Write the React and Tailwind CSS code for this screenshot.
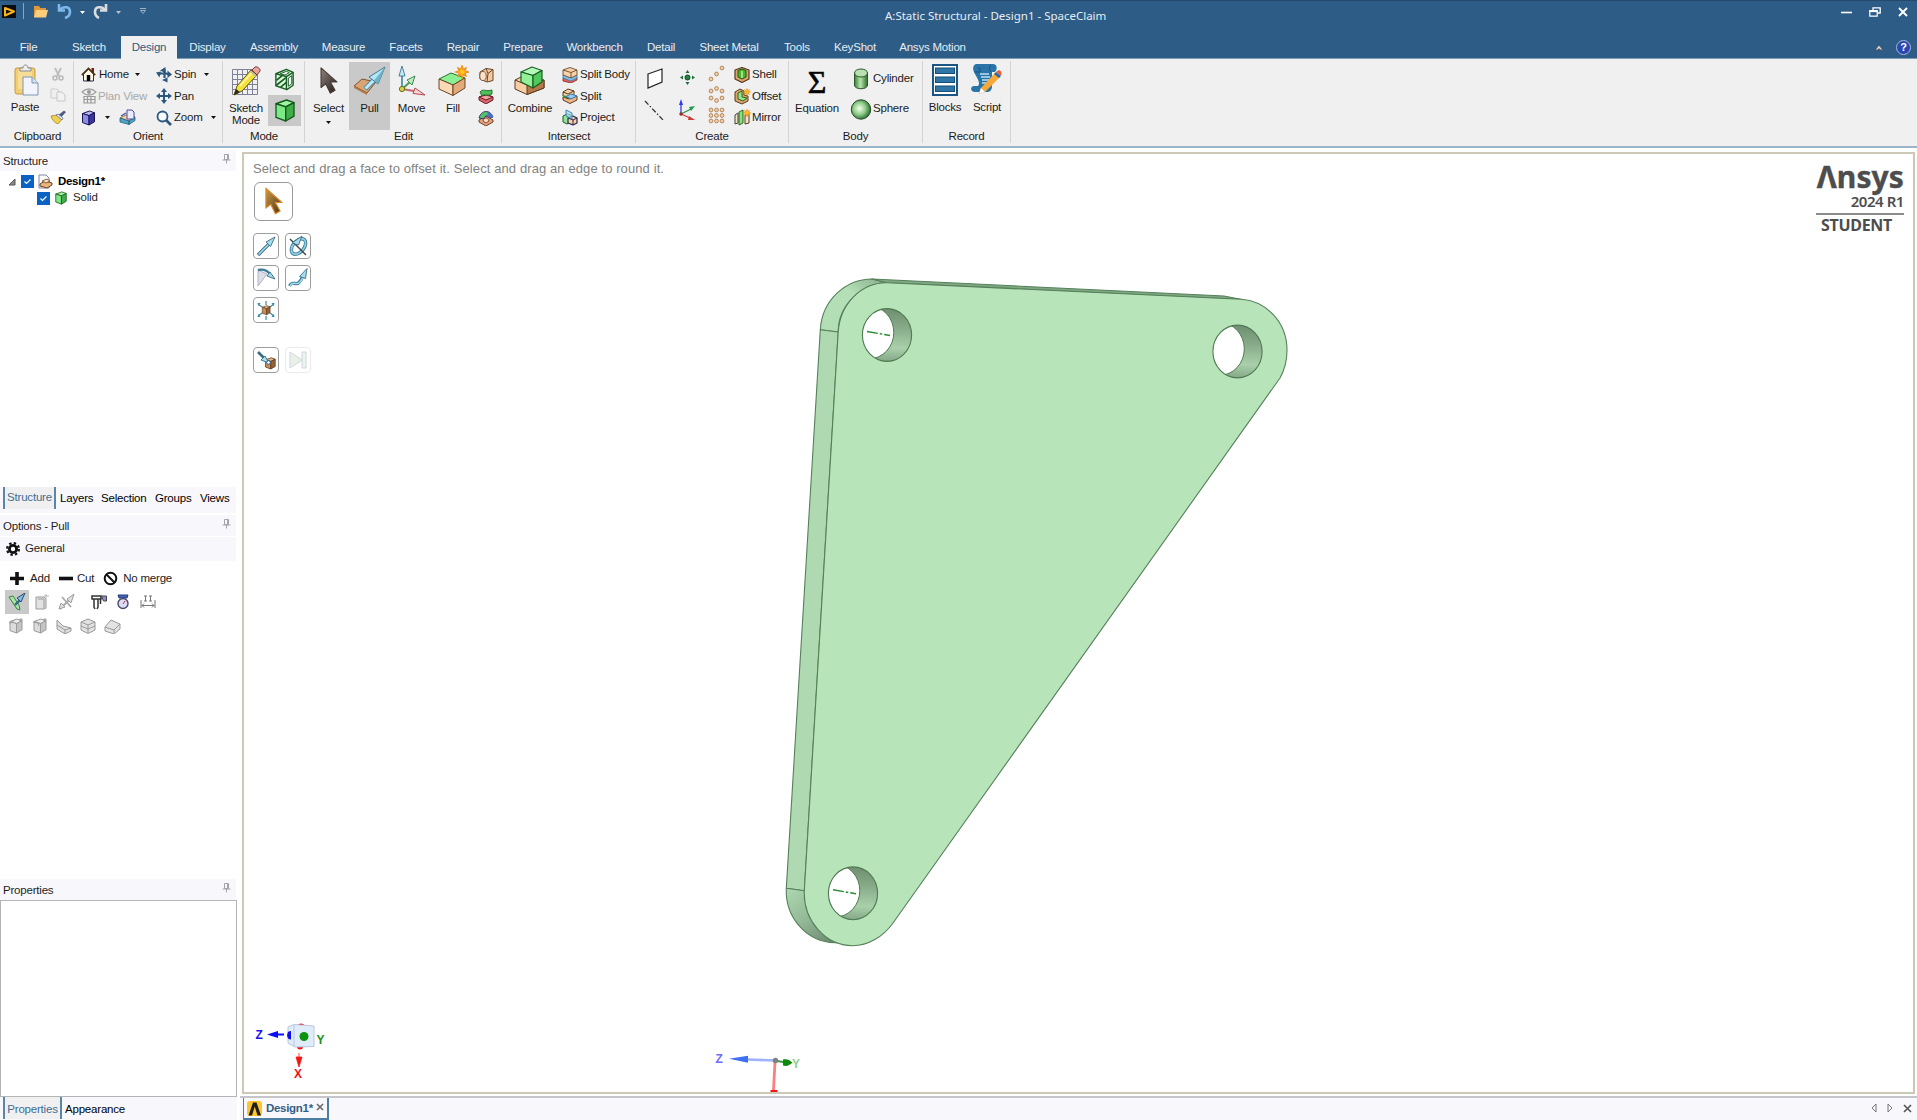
import React from "react";

const Svg = ({ w, h = w, vb, className = "", children }) => (
  <svg width={w} height={h} viewBox={vb || `0 0 ${w} ${h}`} className={`shrink-0 ${className}`} fill="none">
    {children}
  </svg>
);

/* ---------- shared shapes ---------- */
const Block = ({ x = 0, y = 0, s = 1, t, l, r, k, sw = 1 }) => (
  <g transform={`translate(${x} ${y}) scale(${s})`} stroke={k} strokeWidth={sw} strokeLinejoin="round">
    <path d="M2 3.500 9 1l5 1.800L8.500 5.600z" fill={t} />
    <path d="M2 3.500 8.500 5.600V15L2 12.600z" fill={l} />
    <path d="M8.500 5.600 14 2.800v9L8.500 15z" fill={r} />
  </g>
);
const tan = { t: "#e8b37d", l: "#c98c54", r: "#99612f", k: "#5a3a20" };
const green = { t: "#9df5a2", l: "#7fe886", r: "#3fae49", k: "#145a1c" };
const gray = { t: "#ededed", l: "#dcdcdc", r: "#c4c4c4", k: "#9b9b9b" };

const Caret = ({ className = "" }) => (
  <Svg w={5} h={3} className={className}><path d="M0 0h5L2.5 3z" fill="#111" /></Svg>
);
const Spark = ({ x, y, s = 1 }) => (
  <g transform={`translate(${x} ${y}) scale(${s})`}>
    <path d="M0-5 1-2 3.500-3.500 2-1 5 0 2 1 3.500 3.500 1 2 0 5-1 2-3.500 3.500-2 1-5 0-2-1-3.500-3.500-1-2z" fill="#ffc21f" stroke="#f08a12" strokeWidth=".8" />
  </g>
);

/* ---------- ribbon icons ---------- */
const PasteIcon = () => (
  <Svg w={26} h={32}>
    <rect x="1" y="4" width="20" height="26" rx="2" fill="#f2cd72" stroke="#c79a3e" />
    <path d="M4 7h14v18H4z" fill="#f8dd95" />
    <path d="M6 7V4h3c0-4 5-4 5 0h3v3z" fill="#ececec" stroke="#8a8a8a" />
    <path d="M9 13h9l6 6v12H9z" fill="#f1f5fb" stroke="#7e93b5" />
    <path d="M18 13v6h6" fill="#d7e1f0" stroke="#7e93b5" />
  </Svg>
);
const ScissorsIcon = () => (
  <Svg w={14} h={14} className="opacity-70">
    <path d="M4 1l4 8M10 1 6 9" stroke="#a8a8a8" strokeWidth="1.800" />
    <circle cx="4" cy="11" r="2" stroke="#a0a0a0" strokeWidth="1.500" /><circle cx="10" cy="11" r="2" stroke="#a0a0a0" strokeWidth="1.500" />
  </Svg>
);
const CopyIcon = () => (
  <Svg w={16} h={14}>
    <path d="M1 1h6l2 2v7H1z" fill="#efefef" stroke="#cccccc" /><path d="M7 4h5l3 3v6H7z" fill="#f2f2f2" stroke="#c6c6c6" />
  </Svg>
);
const BrushIcon = () => (
  <Svg w={16} h={14}>
    <path d="M9 5l5-4 1.500 1L11 7z" fill="#4a5a8a" stroke="#333c66" strokeWidth=".6" />
    <path d="M1 6l6-1 5 4-4 5c-3-1-6-4-7-8z" fill="#f0cf55" stroke="#a98520" strokeWidth=".8" />
    <path d="M6 5l2-1 5 4-1 2z" fill="#e8ecf5" stroke="#67708f" strokeWidth=".8" />
  </Svg>
);
const HomeIcon = () => (
  <Svg w={15} h={15}>
    <path d="M10.500 1h2.500v5h-2.500z" fill="#7d1a1a" />
    <path d="M2.500 7 7.500 2l5 5v7h-10z" fill="#fff8e4" stroke="#2c2a55" />
    <path d="M.8 8.200 7.500 1.500l6.700 6.700" stroke="#4d3510" strokeWidth="1.700" />
    <path d="M5.800 8h3.400v6H5.800z" fill="#000" />
  </Svg>
);
const PlanIcon = () => (
  <Svg w={17} h={16}>
    <path d="M1 4c4-4 10-4 14 0-4 4-10 4-14 0z" stroke="#a5a5a5" strokeWidth="1.300" /><circle cx="8" cy="4" r="2" fill="#989898" />
    <path d="M3 8.500h11v6.500H3zM3 11.500h11M6.500 8.500V15M10 8.500V15" stroke="#9a9a9a" strokeWidth="1.200" />
  </Svg>
);
const BlueCube = () => (
  <Svg w={15} h={16}><Block x={-0.5} t="#b9b6f5" l="#8d8aec" r="#3834a0" k="#19164f" /></Svg>
);
const SectionIcon = () => (
  <Svg w={17} h={16}>
    <path d="M1 9l6-3 9 2-6 4z" fill="#f3d0a6" stroke="#7a5836" strokeWidth=".8" />
    <path d="M1 9v4l9 2.500V12zM10 12v3.500l6-4V8z" fill="#4ea3c9" stroke="#28617c" strokeWidth=".8" />
    <path d="M8 1h5l2 2v7H8z" fill="#e9ebfb" stroke="#4a4aa0" /><path d="M2 7l5-3" stroke="#4a4aa0" strokeWidth="1.300" />
  </Svg>
);
const SpinIcon = () => (
  <Svg w={16} h={16}>
    <path d="M8.500 2V11M2 7.500c3-1.500 8-1.500 11 0" stroke="#2d587d" strokeWidth="2.200" />
    <path d="M4 3.500L9.500 0v6zM11.500 3.500l4.500 4-4.500 3.500zM0 5.500l5-1-1.500 6zM11.500 10.500v5L6 13z" fill="#2d587d" />
  </Svg>
);
const PanIcon = () => (
  <Svg w={16} h={16}>
    <path d="M8 2v12M2 8h12" stroke="#2d587d" strokeWidth="2" />
    <path d="M8 0l3 4H5zM8 16l3-4H5zM0 8l4-3v6zM16 8l-4-3v6z" fill="#2d587d" />
  </Svg>
);
const ZoomIcon = () => (
  <Svg w={16} h={16}>
    <circle cx="6.500" cy="6.500" r="5" fill="#f6fafd" stroke="#2d587d" strokeWidth="1.800" /><path d="M10 10l5 5" stroke="#2d587d" strokeWidth="2.600" />
  </Svg>
);
const SketchIcon = () => (
  <Svg w={30} h={32}>
    <path d="M1.500 4.500h25v25h-25zM1.500 9.500h25M1.500 14.500h25M1.500 19.500h25M1.500 24.500h25M6.500 4.500v25M11.500 4.500v25M16.500 4.500v25M21.500 4.500v25" stroke="#7f8098" />
    <path d="M3 30l3-9L20 5l6 5L11 26z" fill="#f4e23c" stroke="#5d5510" />
    <path d="M9 21L21 7.500" stroke="#fffbb0" strokeWidth="1.500" /><path d="M3 30l2-6 4 3z" fill="#2e2a12" />
    <path d="M21 5l3-3c2-1 6 2 5 4l-3 4z" fill="#e9a29c" stroke="#7a3b38" /><path d="M19.500 6.500l6 5" stroke="#b9b9b9" strokeWidth="1.500" />
  </Svg>
);
const HatchCube = () => (
  <Svg w={21} h={23} vb="0 0 21 24">
    <path d="M1.500 6l11-4.500 7 3v13.500l-6.500 4.500-11.500-4z" fill="#d8fbdc" stroke="#1b5e26" strokeWidth="1.500" strokeLinejoin="round" />
    <path d="M1.500 6l11 3v13.500M12.500 9l7-4.500" stroke="#1b5e26" strokeWidth="1.500" />
    <path d="M2 13l6-5M2 18l10-8M6.500 20l6-5" stroke="#1b5e26" strokeWidth="1.800" />
    <path d="M14.500 10.500v8.500l3.500-2.500V8zM6 6l6.500-2.500 3 1.300-4.500 2.500z" fill="#fff" stroke="#1b5e26" />
  </Svg>
);
const GreenCube = ({ w = 24, h = 25 }) => (
  <Svg w={w} h={h} vb="0 0 16 16"><Block {...green} sw={0.9} /></Svg>
);
const Pointer = ({ a, b, k, w = 20, h = 30 }) => (
  <Svg w={w} h={h} vb="0 0 20 30">
    <defs><linearGradient id={`ptr${a.slice(1)}`} x1="0" y1="0" x2="1" y2="1"><stop offset="0" stopColor={a} /><stop offset="1" stopColor={b} /></linearGradient></defs>
    <path d="M2 1v21l5-4 5 10 5-3-5-9h7z" fill={`url(#ptr${a.slice(1)})`} stroke={k} strokeWidth="1.200" strokeLinejoin="round" />
  </Svg>
);
const PullIcon = () => (
  <Svg w={34} h={32}>
    <path d="M1 21l8-7 14 3-9 11z" fill="#dba472" stroke="#7d532d" /><path d="M1 21v2l13 7v-2z" fill="#b37a48" />
    <path d="M12 24l9-9" stroke="#4c8fa8" strokeWidth="5" /><path d="M12.500 23.500l9-9" stroke="#bfeaf5" strokeWidth="3" />
    <path d="M32 2L16 12l9 7z" fill="#b4e6f3" stroke="#47788d" strokeLinejoin="round" /><path d="M32 2L21 15.500l4 3.500z" fill="#6db3ca" />
  </Svg>
);
const MoveIcon = () => (
  <Svg w={30} h={32}>
    <path d="M5 24V8" stroke="#5f9bb5" strokeWidth="2" /><path d="M5 1L2 11h6z" fill="#c6ebf5" stroke="#4c8099" />
    <path d="M5 24l8-7" stroke="#4d9a5d" strokeWidth="2" /><path d="M18 11l-8 4 5 5z" fill="#bdeac2" stroke="#3d8b4d" />
    <path d="M5 24l12 2" stroke="#c16b70" strokeWidth="2" /><path d="M28 30l-10-7-2 5.500z" fill="#f5d5d5" stroke="#b6484e" />
    <circle cx="5" cy="24" r="2.600" fill="#d4d44c" stroke="#6c6c1c" />
  </Svg>
);
const FillIcon = () => (
  <Svg w={32} h={32}>
    <g stroke="#6b4426" strokeLinejoin="round"><path d="M2 14l12-6 14 5-12 7z" fill="#8bf091" stroke="#27752f" /><path d="M2 14v10l14 6.500V20z" fill="#fbd9b4" /><path d="M16 20v10.500L28 23V13z" fill="#e2ab7a" /></g>
    <Spark x={25} y={7} s={1.300} />
  </Svg>
);
const MiniA = () => (
  <Svg w={16} h={16}><path d="M2 5l6-3.500 7 1v11l-6 1.500-7-3z" fill="#f3c99f" stroke="#6b4426" /><path d="M8 1.500l2 5-1 8M15 2.500l-5 4" stroke="#6b4426" /><ellipse cx="5" cy="9" rx="3.200" ry="4.500" fill="#fbe3ca" stroke="#6b4426" strokeWidth=".8" /></Svg>
);
const MiniB = () => (
  <Svg w={16} h={16}><path d="M1 9l7-3 7 3v3l-7 4-7-4z" fill="#d8646c" stroke="#6d1f26" /><path d="M1 9l7 3 7-3-7-2z" fill="#f3a2a2" stroke="#6d1f26" /><path d="M2 4c3-4 6 0 12-2v4C9 9 6 5 4 8z" fill="#4fbf5c" stroke="#1c6b27" strokeWidth=".9" /></Svg>
);
const MiniC = () => (
  <Svg w={16} h={16}><path d="M1 10l7-4 7 4v2l-7 4-7-4z" fill="#e5a07c" stroke="#6b4426" /><path d="M1 8C3 0 12-1 15 7l-4 1C10 5 7 5 6 9z" fill="#52c06c" stroke="#3a2d6b" /><path d="M9 2c3 0 5 2 6 5l-4 1z" fill="#4b6fd0" /><path d="M5 11c1-4 5-4 6 0l-3 2z" fill="#f6dcc0" stroke="#6d2f26" strokeWidth=".8" /></Svg>
);
const CombineIcon = () => (
  <Svg w={34} h={32}>
    <g strokeLinejoin="round" stroke="#5a3a20"><path d="M2 15l8-4 21 4v8L14 29.500 2 24z" fill="#f8cfa5" /><path d="M14 20v9.500L31 23v-8z" fill="#b57a48" /><path d="M2 15l12 5" /></g>
    <g strokeLinejoin="round" stroke="#176024" strokeWidth="1.200"><path d="M8 7l11-5 10 3.500-9 5z" fill="#b5f9b6" /><path d="M8 7v10l12 6V10.500z" fill="#93f097" /><path d="M20 10.500V23l9-6V5.500z" fill="#4fc85c" /></g>
  </Svg>
);
const SplitBodyIcon = () => (
  <Svg w={16} h={16}><g strokeLinejoin="round" strokeWidth=".8"><path d="M1 11v3l8 2 6-3v-3z" fill="#e55e55" stroke="#872720" /><path d="M1 8v3l8 3 6-3V8z" fill="#7cc0ee" stroke="#3c78a5" /><path d="M1 3l7-2.500L15 3v5l-6 3-8-3z" fill="#f8d1a6" stroke="#5a3a20" /><path d="M1 3l8 2.500L15 3M9 5.500V11" stroke="#5a3a20" /></g></Svg>
);
const SplitIcon = () => (
  <Svg w={16} h={16}><g strokeLinejoin="round"><path d="M1 4l5-3 6 2v4l-6 3-5-2z" fill="#f8d1a6" stroke="#5a3a20" /><path d="M1 4l5 2 6-3" stroke="#5a3a20" /><path d="M1 9l6 2 8-3v4l-7 3.500L1 12z" fill="#efb888" stroke="#5a3a20" /><path d="M4 8.500l5-2.500 6 2-6 3z" fill="#93cdf1" stroke="#3c78a5" /><path d="M1 8l3 1" stroke="#2aa23a" strokeWidth="2" /></g></Svg>
);
const ProjectIcon = () => (
  <Svg w={16} h={17}><g strokeLinejoin="round"><path d="M1 7l4-2 4 1v7l-4 2-4-2z" fill="#8fe496" stroke="#1c5b2a" /><path d="M6 9l5-2 4 2v5l-4 2-5-2z" fill="#f8d1a6" stroke="#2a2455" strokeWidth="1.200" /><path d="M6 9l5 2 4-2M11 11v5" stroke="#2a2455" /><path d="M4 1l6 3v6L4 7z" fill="#a4d8f0" fillOpacity=".7" stroke="#3c88b5" /></g></Svg>
);
const PlaneIcon = () => <Svg w={18} h={21}><path d="M2 6l14-5v13L2 20z" fill="#fff" stroke="#222" strokeWidth="1.200" /></Svg>;
const AxisLine = () => <Svg w={22} h={22}><path d="M1 1l19 20" stroke="#333" strokeWidth="1.300" strokeDasharray="5 2 1.500 2" /></Svg>;
const PointIcon = () => (
  <Svg w={15} h={15}><circle cx="7.500" cy="7.500" r="2.500" fill="#1c8a3d" stroke="#173f25" /><path d="M7.500 0l2 3h-4zM7.500 15l2-3h-4zM0 7.500l3-2v4zM15 7.500l-3-2v4z" fill="#1e6d38" /></Svg>
);
const AxesIcon = () => (
  <Svg w={18} h={22}><path d="M3 15V5" stroke="#2b3bf0" strokeWidth="1.300" /><path d="M3 0l2 6H1z" fill="#2b3bf0" /><path d="M3 15l10-5" stroke="#1e9a4a" strokeWidth="1.300" /><path d="M17 7l-6 1 2 4z" fill="#1e9a4a" /><path d="M3 15l9 4" stroke="#d23b33" strokeWidth="1.300" /><path d="M17 21l-6-4-1 4z" fill="#d23b33" /><circle cx="3" cy="15" r="1.700" fill="#a02a22" /></Svg>
);
const Dots = ({ pts }) => (
  <Svg w={17} h={17}>{pts.map(([x, y]) => <circle key={`${x}-${y}`} cx={x} cy={y} r="1.900" fill="#f6cfa4" stroke="#a98059" strokeWidth=".9" />)}</Svg>
);
const linear = [[3, 14], [8.5, 9], [14, 3]];
const circular = [[8.5, 2.5], [14, 5], [14, 12], [8.5, 14.5], [3, 12], [3, 5]];
const gridPts = [[3, 3], [8.5, 3], [14, 3], [3, 8.5], [8.5, 8.5], [14, 8.5], [3, 14], [8.5, 14], [14, 14]];
const ShellIcon = () => (
  <Svg w={16} h={16}><g strokeLinejoin="round"><path d="M1 3l7-2.500L15 3v9l-7 3.500L1 12z" fill="#dca36c" stroke="#5a3a20" strokeWidth="1.200" /><path d="M4 3.500l4-1.500 4 1.500V10l-4 2-4-2z" fill="#49b32f" stroke="#1d5c12" /><path d="M8 4v7" stroke="#b8f59d" strokeWidth="1.500" /></g></Svg>
);
const OffsetIcon = () => (
  <Svg w={17} h={17}><g strokeLinejoin="round"><path d="M1 4l5-3 4 2v4l4 1v5l-6 3-7-3z" fill="#dca36c" stroke="#5a3a20" /><path d="M4 5l4-2v6l5 1-4 3-5-2z" fill="#9be28c" stroke="#256b1c" /></g><Spark x={13} y={4} s={0.7} /></Svg>
);
const MirrorIcon = () => (
  <Svg w={17} h={17}><g strokeLinejoin="round"><path d="M1 6l3-2v10l-3 1z" fill="#f8e0c4" stroke="#444" /><path d="M5 3l4-2v13l-4 2z" fill="#8adf7e" stroke="#256b1c" /><path d="M11 6l4-1v9l-4 1z" fill="#f3e3cf" stroke="#5a3a20" /></g><Spark x={13} y={4} s={0.75} /></Svg>
);
const CylinderIcon = () => (
  <Svg w={16} h={22}><defs><linearGradient id="cyl"><stop offset="0" stopColor="#3d7c3a" /><stop offset=".45" stopColor="#b6e6ac" /><stop offset="1" stopColor="#2f6d2e" /></linearGradient></defs>
    <path d="M1.500 5v12c0 5 13 5 13 0V5z" fill="url(#cyl)" stroke="#28562a" /><ellipse cx="8" cy="5" rx="6.500" ry="4" fill="#b9dfb3" stroke="#28562a" /></Svg>
);
const SphereIcon = () => (
  <Svg w={22} h={21}><defs><radialGradient id="sph" cx=".42" cy=".45" r=".6"><stop offset="0" stopColor="#f4fff0" /><stop offset=".5" stopColor="#94d08e" /><stop offset="1" stopColor="#25652c" /></radialGradient></defs>
    <ellipse cx="11" cy="10.500" rx="9.700" ry="9.700" fill="url(#sph)" stroke="#1f4a24" /></Svg>
);
const BlocksIcon = () => (
  <Svg w={26} h={32}><rect x="1" y="1" width="24" height="30" fill="#fff" stroke="#1b5581" strokeWidth="2" />
    {[4, 13, 22].map((y) => <rect key={y} x="3.500" y={y} width="19" height="5.500" fill="#2f76a6" stroke="#174e78" />)}</Svg>
);
const ScriptIcon = () => (
  <Svg w={34} h={34}>
    <path d="M6 1h17c4 0 5 5 2 8h-3v14c0 4-2 6-5 6H5c-5 0-5-6-1-6h4c3-3-1-8-3-12C2 6 3 2 6 1z" fill="#2a74a8" />
    <path d="M8 5c2-1 3 2 2 4H5M21 2c-2 2-2 5 0 7" stroke="#14527f" />
    <path d="M10 11h9M11 14h9M12 17h8M12 20h6" stroke="#bfe0f3" strokeWidth="1.300" />
    <path d="M9 31l2-6L25 10l5 4-15 15z" fill="#f8a93a" /><path d="M9 31l2-6 4 4z" fill="#fff" stroke="#ccc" strokeWidth=".5" />
    <path d="M24 11l2-2 5 4-2 2z" fill="#1f6da4" /><path d="M26 9l2-1.500c2-1 4 1.500 3.500 3L31 13z" fill="#e8603c" />
  </Svg>
);

/* ---------- ribbon structure ---------- */
const Group = ({ w, label, labelClass = "", children }) => (
  <section className={`${w} flex h-[87px] shrink-0 flex-col`}>
    <div className="flex h-[70px]">{children}</div>
    <div className={`text-center leading-[14px] ${labelClass}`}>{label}</div>
  </section>
);
const Sep = () => <div className="mt-[2px] h-[82px] w-px shrink-0 bg-[#d3d3d3]" />;
const Big = ({ w, icon, label, className = "", children }) => (
  <button className={`${w} flex h-[68px] shrink-0 flex-col items-center text-center ${className}`}>
    <span className="flex h-[32px] items-center justify-center">{icon}</span>
    <span className="mt-[5px] leading-[12px] whitespace-pre">{label}</span>
    {children}
  </button>
);
const Row = ({ icon, label, iw = "w-[17px]", caret, className = "" }) => (
  <div className={`flex h-[21.5px] items-center ${className}`}>
    <span className={`${iw} flex shrink-0 items-center`}>{icon}</span>
    <span className="whitespace-nowrap">{label}</span>
    {caret && <Caret className={caret} />}
  </div>
);

const Ribbon = () => (
  <div className="flex h-[89px] border-b-2 border-[#9ab5ca] bg-[#f0f0f0] text-[#1c1c1c]">
    <Group w="w-[73px]" label="Clipboard" labelClass="pl-[2px]">
      <Big w="ml-[6px] w-[38px]" className="pt-[5px]" icon={<span className="pl-[3px]"><PasteIcon /></span>} label="Paste" />
      <div className="ml-[6px] flex w-[18px] flex-col pt-[4px]">
        <Row icon={<ScissorsIcon />} className="pl-px" /><Row icon={<CopyIcon />} /><Row icon={<BrushIcon />} />
      </div>
    </Group>
    <Sep />
    <Group w="w-[148px]" label="Orient">
      <div className="ml-[7px] w-[75px] pt-[5px]">
        <Row icon={<HomeIcon />} label="Home" iw="w-[18px]" caret="ml-[6px]" />
        <Row icon={<PlanIcon />} label="Plan View" className="text-[#a9a9a9]" />
        <Row icon={<BlueCube />} label="" iw="w-[24px]" caret="mr-[9px]" />
      </div>
      <div className="-ml-[37px] flex w-[37px] flex-col justify-end pb-[1px]"><Row icon={<SectionIcon />} /></div>
      <div className="pt-[5px]">
        <Row icon={<SpinIcon />} label="Spin" iw="w-[18px]" caret="ml-[8px]" />
        <Row icon={<PanIcon />} label="Pan" iw="w-[18px]" />
        <Row icon={<ZoomIcon />} label="Zoom" iw="w-[18px]" caret="ml-[8px]" />
      </div>
    </Group>
    <Sep />
    <Group w="w-[81px]" label="Mode" labelClass="pl-px">
      <Big w="ml-[3px] w-[40px]" className="pt-[6px]" icon={<SketchIcon />} label={"Sketch\nMode"} />
      <div className="ml-[2px] flex w-[33px] flex-col items-center pt-[9px]">
        <HatchCube />
        <span className="mt-[4px] flex h-[31px] w-[33px] items-center justify-center bg-[#c9c9c9]"><GreenCube /></span>
      </div>
    </Group>
    <Sep />
    <Group w="w-[196px]" label="Edit" labelClass="pl-px">
      <Big w="ml-[3px] w-[41px]" className="pt-[6px]" icon={<Pointer a="#8d8480" b="#241b18" k="#4a3a34" w={19} h={28} />} label="Select"><Caret className="mt-[7px]" /></Big>
      <Big w="w-[41px]" className="mt-[3px] bg-[#c9c9c9] pt-[3px]" icon={<PullIcon />} label="Pull" />
      <Big w="w-[43px]" className="pt-[6px]" icon={<MoveIcon />} label="Move" />
      <Big w="w-[40px]" className="pt-[6px]" icon={<FillIcon />} label="Fill" />
      <div className="ml-[5px] pt-[5px]"><Row icon={<MiniA />} /><Row icon={<MiniB />} /><Row icon={<MiniC />} /></div>
    </Group>
    <Sep />
    <Group w="w-[133px]" label="Intersect" labelClass="pl-px">
      <Big w="ml-[3px] w-[50px]" className="pt-[6px]" icon={<CombineIcon />} label="Combine" />
      <div className="ml-[7px] pt-[5px]">
        <Row icon={<SplitBodyIcon />} iw="w-[18px]" label="Split Body" /><Row icon={<SplitIcon />} iw="w-[18px]" label="Split" /><Row icon={<ProjectIcon />} iw="w-[18px]" label="Project" />
      </div>
    </Group>
    <Sep />
    <Group w="w-[152px]" label="Create">
      <div className="ml-[8px] flex w-[22px] flex-col items-center gap-[11px] pt-[9px]"><PlaneIcon /><AxisLine /></div>
      <div className="ml-[11px] flex w-[20px] flex-col items-center gap-[14px] pt-[11px]"><PointIcon /><AxesIcon /></div>
      <div className="ml-[11px] flex flex-col gap-[4px] pt-[6px]"><Dots pts={linear} /><Dots pts={circular} /><Dots pts={gridPts} /></div>
      <div className="ml-[9px] pt-[5px]">
        <Row icon={<ShellIcon />} iw="w-[18px]" label="Shell" /><Row icon={<OffsetIcon />} iw="w-[18px]" label="Offset" /><Row icon={<MirrorIcon />} iw="w-[18px]" label="Mirror" />
      </div>
    </Group>
    <Sep />
    <Group w="w-[133px]" label="Body">
      <div className="ml-[3px] flex w-[50px] flex-col items-center pt-[6px]">
        <span className="h-[37px] font-['Liberation_Serif'] text-[32px] leading-[34px] tracking-normal text-black [-webkit-text-stroke:0.7px_#111]">Σ</span>
        <span className="leading-[13px]">Equation</span>
      </div>
      <div className="ml-[6px] pt-[5px]">
        <div className="flex h-[30px] items-center"><span className="flex w-[25px] justify-center"><CylinderIcon /></span>Cylinder</div>
        <div className="flex h-[30px] items-center"><span className="flex w-[25px] justify-center"><SphereIcon /></span>Sphere</div>
      </div>
    </Group>
    <Sep />
    <Group w="w-[87px]" label="Record">
      <Big w="ml-[1px] w-[42px]" className="pt-[5px]" icon={<BlocksIcon />} label="Blocks" />
      <Big w="w-[42px]" className="pt-[5px]" icon={<ScriptIcon />} label="Script" />
    </Group>
    <Sep />
  </div>
);

const tabs = [
  ["File", "w-[57px]"], ["Sketch", "w-[64px]"], ["Design", "w-[56px]"], ["Display", "w-[61px]"], ["Assembly", "w-[72px]"], ["Measure", "w-[67px]"],
  ["Facets", "w-[58px]"], ["Repair", "w-[56px]"], ["Prepare", "w-[64px]"], ["Workbench", "w-[79px]"], ["Detail", "w-[54px]"], ["Sheet Metal", "w-[82px]"],
  ["Tools", "w-[54px]"], ["KeyShot", "w-[62px]"], ["Ansys Motion", "w-[93px]"],
];

const Header = () => (
  <header className="h-[59px] border-t border-b border-t-[#234a6c] border-b-[#7d9cb6] bg-[#2d5c86] text-[#e6edf4]">
    <div className="flex h-[35px] items-start">
      <div className="flex h-[20px] w-[300px] items-center pl-[2px]">
        <Svg w={14} h={13}><rect width="14" height="13" fill="#0c0c0c" /><path d="M3 3l9 3.500-9 4z" fill="none" stroke="#fdb515" strokeWidth="2" strokeLinejoin="round" /></Svg>
        <div className="ml-[7px] h-[16px] w-px bg-[#8aa5bd]" />
        <Svg w={15} h={13} className="ml-[9px]"><path d="M1 1h5l1.500 2H13v9H1z" fill="#e0963a" /><path d="M3 5h12l-2 7.500H1z" fill="#ffcf7e" /></Svg>
        <Svg w={15} h={15} className="ml-[9px]"><path d="M2 0v6.500h6" stroke="#7db9ea" strokeWidth="2.600" /><path d="M3 6c3-4 10-4 10 2 0 3-2 5-5 6" stroke="#7db9ea" strokeWidth="2.600" /></Svg>
        <Svg w={5} h={3} className="ml-[8px] mt-[3px]"><path d="M0 0h5L2.500 3z" fill="#fff" /></Svg>
        <Svg w={15} h={15} className="ml-[8px]"><path d="M13 0v6.500H7" stroke="#dcdcdc" strokeWidth="2.600" /><path d="M12 6C9 2 2 2 2 8c0 3 2 5 4 6" stroke="#dcdcdc" strokeWidth="2.600" /></Svg>
        <Svg w={5} h={3} className="ml-[8px] mt-[3px]"><path d="M0 0h5L2.500 3z" fill="#b9c6d2" /></Svg>
        <Svg w={6} h={6} className="ml-[19px]"><path d="M0 .5h6M.5 2.500h5L3 5.500z" stroke="#b9c6d2" strokeWidth=".8" /></Svg>
      </div>
      <h1 className="ml-[585px] w-[230px] whitespace-nowrap font-['Noto_Sans'] text-[11.5px] font-normal leading-[30px] tracking-[-0.01px]">A:Static Structural - Design1 - SpaceClaim</h1>
      <div className="ml-auto flex h-[21px] items-center gap-[17px] pr-[9px]">
        <Svg w={11} h={10}><path d="M0 5.500h11" stroke="#fff" strokeWidth="1.600" /></Svg>
        <Svg w={12} h={10}><path d="M4 3V.8h7.200V6H8.500" stroke="#fff" strokeWidth="1.300" /><path d="M.8 3.600h7.400v5.600H.8z" stroke="#fff" strokeWidth="1.200" /><path d="M.5 4.200h8" stroke="#fff" strokeWidth="1.800" /></Svg>
        <Svg w={10} h={10}><path d="M1 1l8 8M9 1L1 9" stroke="#fff" strokeWidth="1.900" /></Svg>
      </div>
    </div>
    <nav className="flex h-[22px] items-center">
      {tabs.map(([t, w]) => (
        <span key={t} className={`${w} flex shrink-0 items-center justify-center pt-px ${t === "Design" ? "mt-px h-[23px] bg-[#f0f0f0] text-[#2d5c86]" : "h-[22px]"}`}>{t}</span>
      ))}
      <Svg w={10} h={7} className="ml-auto"><path d="M1 6l4-5 4 5z" fill="#d7dde3" stroke="#49545e" /><path d="M3.500 6L5 4l1.500 2z" fill="#49545e" /></Svg>
      <span className="ml-[12px] mr-[6px] flex h-[15px] w-[15px] items-center justify-center rounded-full border border-[#a9b9dd] bg-[#2846b0] text-[11px] font-bold text-white">?</span>
    </nav>
  </header>
);

/* ---------- left side ---------- */
const Pin = () => <Svg w={9} h={10}><path d="M2.500.5h4v5h-4zM.5 6h8M4.500 6v3.500M5.500 1v4" stroke="#a3a3ab" /></Svg>;
const PanelHead = ({ title }) => (
  <div className="flex h-[21px] items-center justify-between bg-[#f7f7fc] pl-[3px] pr-[5px] pt-[2px]"><span>{title}</span><span className="-mt-[6px]"><Pin /></span></div>
);
const Check = () => (
  <Svg w={13} h={13}><rect width="13" height="13" fill="#0a63c2" /><path d="M3.500 6.500l2 2 4-4" stroke="#fff" strokeWidth="1.200" /></Svg>
);
const optionRow1 = [
  <Svg w={18} h={18}><path d="M1 4l4-1 6 9 1 5-3-1z" fill="#a9e5a4" stroke="#3d8045" /><path d="M7 12l6-6" stroke="#2f6a84" strokeWidth="2.400" /><path d="M17 0L9 5l4 4z" fill="#7fbbe0" stroke="#2b4d70" /></Svg>,
  <Svg w={16} h={18}><path d="M2 4h8l2 2v9l-2 1H2z" fill="#e2e2e2" stroke="#9a9a9a" /><path d="M4 6h6v9" stroke="#9a9a9a" /><path d="M12 1v5M10 3h5" stroke="#b9b9b9" /></Svg>,
  <Svg w={18} h={18}><path d="M2 16L15 3M4 4l9 10" stroke="#a9a9a9" strokeWidth="1.800" /><path d="M16 1L9 6l4 4zM1 16l2-6 4 4z" fill="#dedede" stroke="#a0a0a0" /></Svg>,
];
const General = () => (
  <div>
    <div className="mt-[6px] flex h-[23px] items-center pl-[9px] text-[#1c1c1c]">
      <Svg w={16} h={15}><path d="M8 1v13M1 7.500h14" stroke="#111" strokeWidth="3.600" /></Svg><span className="ml-[5px]">Add</span>
      <Svg w={16} h={15} className="ml-[8px]"><path d="M1 7.500h14" stroke="#111" strokeWidth="3.600" /></Svg><span className="ml-[3px]">Cut</span>
      <Svg w={15} h={15} className="ml-[9px]"><circle cx="7.500" cy="7.500" r="5.800" stroke="#111" strokeWidth="2" /><path d="M3.500 3.500l8 8" stroke="#111" strokeWidth="2" /></Svg><span className="ml-[5px]">No merge</span>
    </div>
    <div className="flex h-[24px] items-center pl-[5px]">
      <span className="flex h-[24px] w-[24px] items-center justify-center bg-[#c9c9c9]">{optionRow1[0]}</span>
      <span className="flex w-[26px] justify-center">{optionRow1[1]}</span>
      <span className="flex w-[24px] justify-center">{optionRow1[2]}</span>
      <Svg w={16} h={16} className="ml-[12px]"><path d="M1 2h9v3H1zM3 5v8l1 2M7 5v8l-1 2M9.500 4v6" stroke="#333" strokeWidth="1.500" /><path d="M10.500 2h5v5h-3z" fill="#8b8fd8" stroke="#444" /></Svg>
      <Svg w={14} h={16} className="ml-[9px]"><path d="M2 1h10l-1 3H3z" fill="#4664b5" stroke="#233c7c" /><circle cx="7" cy="9.500" r="5" fill="#dcdcf8" stroke="#4a4a68" strokeWidth="1.400" /><path d="M7 10l2-3" stroke="#c33" /></Svg>
      <Svg w={16} h={16} className="ml-[10px]"><path d="M4 2h3M9 2h3M5.500 2v5M10.500 2v5M4 7h3M9 7h3M1 6v8M15 6v8M2 11.500h12M4 9.500l-2 2 2 2M12 9.500l2 2-2 2" stroke="#777" /></Svg>
    </div>
    <div className="flex h-[24px] items-center gap-[8px] pl-[8px]">
      <Svg w={16} h={16}><Block {...gray} /><path d="M1 5c3 0 5-2 5-3M13 0v4M11 2h4" stroke="#999" /></Svg>
      <Svg w={16} h={16}><Block {...gray} /><path d="M1 4l5 1 1 3M13 0v4M11 2h4" stroke="#999" /></Svg>
      <Svg w={16} h={16}><path d="M1 2l6 6 8 2v3l-6 3-8-5z" fill="#e0e0e0" stroke="#999" /><path d="M1 7l8 5 6-2M9 12v4" stroke="#999" /></Svg>
      <Svg w={16} h={16}><path d="M1 4l7-3 7 3v8l-7 3.500L1 12z" fill="#e3e3e3" stroke="#999" /><path d="M1 4l7 3 7-3M8 7v8M1 8l7 3 7-3" stroke="#999" /></Svg>
      <Svg w={17} h={16}><path d="M1 9l6-7 9 4v5l-6 5-9-3z" fill="#e3e3e3" stroke="#999" /><path d="M1 9l9 3 6-6M10 12v3" stroke="#999" /></Svg>
    </div>
  </div>
);
const activeTab = "border-x-2 border-x-[#5a86ac] bg-[#f0f0f0] text-[#3f6d95]";

const Sidebar = () => (
  <aside className="flex w-[237px] shrink-0 flex-col bg-white text-[#1f1f1f]">
    <div className="mt-[2px] mr-[1px]"><PanelHead title="Structure" /></div>
    <div className="h-[316px] pt-[2px]">
      <div className="flex h-[17px] items-center pl-[8px]">
        <Svg w={8} h={8}><path d="M7 1v6H1z" fill="#8a8a8a" stroke="#555" /></Svg>
        <span className="ml-[5px]"><Check /></span>
        <Svg w={15} h={15} className="ml-[4px]"><path d="M1 1h7l3 3v10H1z" fill="#fafafa" stroke="#8189a0" /><path d="M2 10l5-3 7 2v2l-5 3-7-2z" fill="#e8b37d" stroke="#6b4426" /><path d="M4 7l5-2 3 2-4 2z" fill="#f8dcc0" stroke="#6b4426" strokeWidth=".8" /></Svg>
        <b className="ml-[5px] tracking-[-0.3px] text-black">Design1*</b>
      </div>
      <div className="flex h-[16px] items-center pl-[37px]"><Check /><span className="ml-[4px]"><GreenCube w={14} h={14} /></span><span className="ml-[5px]">Solid</span></div>
    </div>
    <div className="mr-[1px] flex h-[26px] bg-[#f7f7fc] pl-[3px] text-black">
      <span className={`flex h-[22px] w-[53px] items-center justify-center ${activeTab}`}>Structure</span>
      <span className="ml-[4px] flex h-[23px] w-[41px] items-center">Layers</span>
      <span className="flex h-[23px] w-[54px] items-center">Selection</span>
      <span className="flex h-[23px] w-[45px] items-center">Groups</span>
      <span className="flex h-[23px] items-center">Views</span>
    </div>
    <div className="mr-[1px] mt-[2px]"><PanelHead title="Options - Pull" /></div>
    <div className="mr-[1px] mt-px flex h-[24px] items-center bg-[#f7f7fc] pl-[6px]">
      <Svg w={14} h={14}>
        <circle cx="7" cy="7" r="3.600" stroke="#111" strokeWidth="2.800" /><circle cx="7" cy="7" r="5.900" stroke="#111" strokeWidth="2.200" strokeDasharray="2.400 2.234" />
      </Svg><span className="ml-[5px]">General</span>
    </div>
    <General />
    <div className="mr-[1px] mt-auto"><PanelHead title="Properties" /></div>
    <div className="h-[197px] border border-[#b4b4b4] bg-white" />
    <div className="flex h-[23px] bg-[#f7f7fc] pl-[3px] text-black">
      <span className={`flex h-[22px] w-[59px] items-center justify-center pt-[3px] ${activeTab}`}>Properties</span>
      <span className="ml-[3px] flex h-[22px] items-center pt-[3px]">Appearance</span>
    </div>
  </aside>
);

/* ---------- viewport ---------- */
const Hole = ({ id, cx, cy, axis }) => (
  <g>
    <clipPath id={id}><ellipse cx={cx} cy={cy} rx="24.600" ry="26.400" /></clipPath>
    <ellipse cx={cx} cy={cy} rx="24.600" ry="26.400" fill="url(#bore)" />
    <ellipse cx={cx - 17.8} cy={cy - 2.6} rx="24.600" ry="26.400" fill="#fff" stroke="#4f7a52" clipPath={`url(#${id})`} />
    <ellipse cx={cx} cy={cy} rx="24.600" ry="26.400" stroke="#4f7a52" strokeWidth="1.100" />
    {axis && <path d={`M${cx - 20} ${cy - 3.5}l23 4`} stroke="#2c8a35" strokeWidth="1.400" strokeDasharray="11 2 2.500 2" />}
  </g>
);
const Scene = () => (
  <svg viewBox="244 154 1670 940" width="1670" height="940" className="absolute inset-0" fill="none">
    <defs>
      <linearGradient id="bore" x1=".8" y1="0" x2=".75" y2="1"><stop offset="0" stopColor="#6f8f70" /><stop offset=".35" stopColor="#86a987" /><stop offset=".75" stopColor="#a9d0aa" /><stop offset="1" stopColor="#87a988" /></linearGradient>
      <linearGradient id="low" x1="0" y1="0" x2=".8" y2="1"><stop offset="0" stopColor="#add8b0" /><stop offset=".5" stopColor="#93b896" /><stop offset="1" stopColor="#66836a" /></linearGradient>
      <linearGradient id="high" x1="0" y1="1" x2="1" y2="0"><stop offset="0" stopColor="#b2deb5" /><stop offset=".6" stopColor="#b5e0b7" /><stop offset="1" stopColor="#86ab88" /></linearGradient>
    </defs>
    <g stroke="#55805a" strokeWidth="1.100" strokeLinejoin="round">
      <path d="M820.300 329.700C822 300 846 279 872 279L887 282.700C862 283 838 305 838.200 332z" fill="url(#high)" />
      <path d="M872 279L1224 296 1242 299.500 887 282.700z" fill="#7fa882" />
      <path d="M820.300 329.700L838.200 332 804.300 890.700 786.300 888.300z" fill="#aed9b1" />
      <path d="M786.300 888.300C785 918 807 942 835 942.700L850 944 804.300 890.700z" fill="url(#low)" />
      <path d="M838.200 332C840 304 861 282.500 887 282.700L1241 299.300C1267 301 1287 323 1287 350 1287 361 1284.500 370 1280 378L893 923C883 937 868 945.700 852.700 945.700 825 945.700 803 920 804.300 890.700z" fill="#b8e4ba" />
    </g>
    <Hole id="h1" cx={887} cy={335} axis />
    <Hole id="h2" cx={1237.5} cy={351.5} />
    <Hole id="h3" cx={853} cy={893.3} axis />

    <g fontFamily="Liberation Sans" fontWeight="700" fontSize="12" textAnchor="middle">
      <text x="259" y="1038.500" fill="#1414f0">Z</text><text x="320.500" y="1043.500" fill="#1c901c">Y</text><text x="298" y="1078" fill="#f01414">X</text>
      <text x="719" y="1062.500" fill="#6d6df8">Z</text><text x="796" y="1068" fill="#8fcf92">Y</text>
    </g>
    <path d="M267 1034.500l11-3.500v7zM278 1033.500h6v2h-6z" fill="#0d0df5" />
    <path d="M297.500 1025a4 3 0 0 1 7 0zM297 1046.500a3 3 0 0 0 6 0z" fill="#f51414" />
    <path d="M288 1027l6-2.500 20 1.500v20.500l-19 .5-7-4z" fill="#dfedfb" stroke="#b9c6e0" /><path d="M294 1025v21" stroke="#b9c6e0" />
    <path d="M291 1031a3.800 4.200 0 0 0 0 8.500z" fill="#0d0df5" />
    <circle cx="304" cy="1036.500" r="4.500" fill="#0e930e" />
    <path d="M299 1053v5M296 1057l3 10 3-10z" fill="#f51414" stroke="#f51414" strokeWidth=".8" />
    <path d="M748 1059.500l27 1" stroke="#9fb2fb" strokeWidth="2.600" /><path d="M729 1058.700l19-3v7z" fill="#3f6ff2" />
    <path d="M775 1062l-1.500 28" stroke="#fb7f7f" strokeWidth="2.800" /><path d="M770.500 1090h7v2.500h-7z" fill="#f01818" />
    <path d="M777 1061l8 1.200" stroke="#3f9a3f" strokeWidth="2" /><path d="M783 1059.500c4-1 6 0 9.500 3-3 3-6 4-9.500 3z" fill="#0b8a0b" />
    <circle cx="775.500" cy="1060.500" r="2.700" fill="#808080" />
  </svg>
);
const ToolBtn = ({ children, faded }) => (
  <button className={`flex h-[26px] w-[26px] items-center justify-center rounded-[4px] border bg-white ${faded ? "border-[#e2e2e2] opacity-70" : "border-[#9d9d9d]"}`}>
    <Svg w={22}>{children}</Svg>
  </button>
);
const head = { fill: "#a6dcec", stroke: "#3a6d85", strokeWidth: 0.9, strokeLinejoin: "round" };
const Viewport = () => (
  <main className="relative h-[942px] w-[1673px] border-2 border-[#cdc9b6] bg-white">
    <div className="absolute inset-0 overflow-hidden"><Scene /></div>
    <div className="relative flex justify-between">
      <div className="pl-[9px] pt-[7px]">
        <p className="text-[13px] leading-[16px] tracking-[0.1px] text-[#828282]">Select and drag a face to offset it. Select and drag an edge to round it.</p>
        <button className="mt-[5px] ml-[1px] flex h-[39px] w-[39px] items-center justify-center rounded-[6px] border border-[#999] bg-white"><Pointer a="#c99a4a" b="#4d3312" k="#e08a2c" w={19} h={29} /></button>
        <div className="mt-[12px] grid w-[58px] grid-cols-2 gap-x-[6px] gap-y-[6px]">
          <ToolBtn><path d="M3 20L14 9" stroke="#3a6d85" strokeWidth="3.400" /><path d="M3.500 19.500L14 9" stroke="#a6dcec" strokeWidth="1.600" /><path d="M20 2l-9 5 4.500 4.500z" {...head} /></ToolBtn>
          <ToolBtn><ellipse cx="11.500" cy="11.500" rx="9" ry="5.500" transform="rotate(-50 11.500 11.500)" stroke="#3a7a98" strokeWidth="3.400" /><ellipse cx="11.500" cy="11.500" rx="9" ry="5.500" transform="rotate(-50 11.500 11.500)" stroke="#8fcfe4" strokeWidth="1.800" /><path d="M3 4l16 16" stroke="#444" strokeWidth="1.400" /><path d="M15 1L5 8l6.500 2z" {...head} /></ToolBtn>
          <ToolBtn><path d="M3 3v16L12 7z" fill="#dcdde6" stroke="#b3b5c5" /><path d="M3 3c5-1 9 0 12 4" stroke="#3a7a98" strokeWidth="2.400" /><path d="M20 12l-8-3 3-4z" {...head} /></ToolBtn>
          <ToolBtn><path d="M2.500 19c3-6 6 0 9.500-3.500 2-2 3-3 3.500-6.500" stroke="#3a7a98" strokeWidth="3.200" /><path d="M3 19c3-6 6 0 9.500-3.500 2-2 3-3 3.500-6.500" stroke="#a6dcec" strokeWidth="1.500" /><path d="M20 1.500l-7.500 8 6 2z" {...head} /></ToolBtn>
          <ToolBtn><path d="M11 2v4M11 17v4M3 5l4 3M19 5l-4 3M3 17l4-3M19 17l-4-3" stroke="#3a8aa8" strokeWidth="1.200" /><path d="M2.500 4h3L3.500 7zM19.500 4h-3l2 3zM2.500 18h3l-2-3zM19.500 18h-3l2-3z" fill="#3a8aa8" /><Block x={6} y={6} s={0.65} {...tan} /></ToolBtn>
        </div>
        <div className="mt-[24px] flex gap-[6px]">
          <ToolBtn><Block x={9} y={8} s={0.8} {...tan} /><path d="M3 3l7 7" stroke="#3a6d85" strokeWidth="2.600" /><path d="M14 14l-8-3 4-4z" {...head} /><circle cx="13.500" cy="13.500" r="1.800" fill="#fff" stroke="#2b6cb0" /></ToolBtn>
          <ToolBtn faded><path d="M3 3l12 8-12 8z" fill="#dfeade" stroke="#bcc8cc" /><path d="M15 3h4v16h-4z" fill="#e6efee" stroke="#bcc8cc" /></ToolBtn>
        </div>
      </div>
      <div className="mr-[9px] flex w-[92px] flex-col items-end pt-[7px] font-['Noto_Sans'] text-[#4d4d4d]">
        <span className="text-[30px] font-bold leading-[32px] tracking-[0.1px] [-webkit-text-stroke:0.4px_#4d4d4d]">Λnsys</span>
        <span className="text-[15px] font-semibold leading-[17px] tracking-[-0.45px]">2024 R1</span>
        <span className="mt-[3px] h-[2px] w-[88px] bg-[#8b8b8b]" />
        <span className="mr-[12px] mt-px text-[16px] font-bold leading-[18px] tracking-[-0.3px]">STUDENT</span>
      </div>
    </div>
  </main>
);

export default function App() {
  return (
    <div className="flex h-[1120px] w-[1917px] flex-col overflow-hidden bg-white font-['Liberation_Sans',sans-serif] text-[11.5px] tracking-[-0.2px]">
      <Header />
      <Ribbon />
      <div className="flex h-[972px]">
        <Sidebar />
        <div className="flex min-w-0 grow flex-col pt-[4px]">
          <div className="ml-[5px]"><Viewport /></div>
          <footer className="ml-[3px] mt-[2px] flex h-[24px] border-t-2 border-[#c4c4ca] bg-[#f7f7fc]">
            <div className="ml-[3px] flex h-[22px] w-[86px] items-center border-b-2 border-l border-r-2 border-[#4d7ca4] pl-[3px]">
              <Svg w={15} h={15}><rect width="15" height="15" rx="3" fill="#fdc52a" /><path d="M1.500 14.500L6 1.500h3.500L14 14.500h-3.500L7.700 5.500 5 14.500z" fill="#1d1d1d" /></Svg>
              <b className="ml-[4px] pt-[2px] font-bold tracking-[-0.3px] text-[#336088]">Design1*</b>
              <Svg w={8} h={8} className="-mt-[3px] ml-[3px]"><path d="M1 1l6 6M7 1L1 7" stroke="#6a6a6a" strokeWidth="1.600" /></Svg>
            </div>
            <div className="ml-auto flex items-center gap-[10px] pr-[5px] pb-[2px]">
              <Svg w={6} h={10}><path d="M5 1v8L1 5z" stroke="#777" /></Svg>
              <Svg w={6} h={10}><path d="M1 1v8l4-4z" stroke="#777" /></Svg>
              <Svg w={9} h={9}><path d="M1 1l7 7M8 1L1 8" stroke="#555" strokeWidth="1.600" /></Svg>
            </div>
          </footer>
        </div>
      </div>
    </div>
  );
}
